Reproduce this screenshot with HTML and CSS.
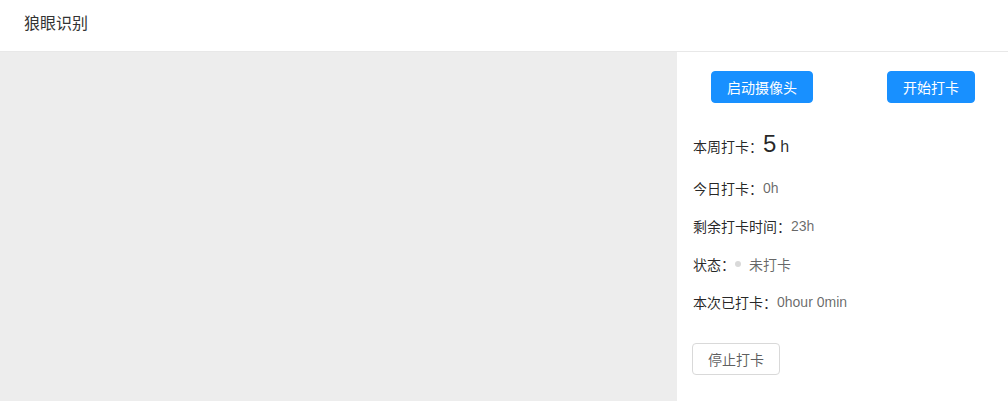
FILE: index.html
```html
<!DOCTYPE html>
<html lang="zh">
<head>
    <meta charset="UTF-8">
    <meta name="viewport" content="width=device-width, initial-scale=1.0">
    <title>狼眼识别</title>
    <link rel="stylesheet" href="styles.css">
</head>
<body>
    <!-- Top bar -->
    <div class="header">狼眼识别</div>

    <div class="main">
        <!-- Camera preview area -->
        <div class="video-box"></div>

        <!-- Clock-in panel -->
        <div class="panel">
            <div class="btn-row">
                <button class="btn btn-primary">启动摄像头</button>
                <button class="btn btn-primary">开始打卡</button>
            </div>

            <div class="row row-week">
                <span class="label">本周打卡：</span><span class="big">5</span><span class="unit">h</span>
            </div>
            <div class="row">
                <span class="label">今日打卡：</span><span class="value">0h</span>
            </div>
            <div class="row">
                <span class="label">剩余打卡时间：</span><span class="value">23h</span>
            </div>
            <div class="row">
                <span class="label">状态：</span><span class="dot"></span><span class="value">未打卡</span>
            </div>
            <div class="row">
                <span class="label">本次已打卡：</span><span class="value">0hour 0min</span>
            </div>

            <button class="btn btn-default">停止打卡</button>
        </div>
    </div>
</body>
</html>
```

FILE: styles.css
```css
body {
    margin: 0;
    font-family: "Liberation Sans", "Noto Sans CJK SC", sans-serif;
    font-size: 14px;
    color: rgba(0, 0, 0, 0.85);
    background-color: #fff;
}
.header {
    height: 51px;
    line-height: 47px;
    padding-left: 24px;
    font-size: 16px;
    color: #333;
    border-bottom: 1px solid #e8e8e8;
}
.main {
    display: flex;
    height: 349px;
}
.video-box {
    flex: 1;
    background-color: #ededed;
}
.panel {
    width: 331px;
    padding-left: 16px;
    box-sizing: border-box;
}
.btn-row {
    display: flex;
    justify-content: space-between;
    padding: 19px 33px 0 18px;
    margin-bottom: 27px;
}
.btn {
    height: 32px;
    padding: 0 15px;
    font-family: "Liberation Sans", "Noto Sans CJK SC", sans-serif;
    font-size: 14px;
    border-radius: 4px;
    border: 1px solid #d9d9d9;
    cursor: pointer;
}
.btn-primary {
    background-color: #1890ff;
    border-color: #1890ff;
    color: #fff;
}
.btn-default {
    background-color: #fff;
    color: rgba(0, 0, 0, 0.65);
    margin-top: 14px;
    margin-left: -1px;
}
.row {
    display: flex;
    align-items: center;
    height: 22px;
    margin-bottom: 16px;
}
.row-week {
    height: 28px;
    margin-bottom: 19px;
    align-items: baseline;
}
.label {
    color: rgba(0, 0, 0, 0.85);
}
.value {
    color: rgba(0, 0, 0, 0.6);
}
.big {
    font-size: 24px;
    color: rgba(0, 0, 0, 0.85);
}
.unit {
    margin-left: 4px;
    font-size: 16px;
    color: rgba(0, 0, 0, 0.85);
}
.dot {
    width: 6px;
    height: 6px;
    border-radius: 50%;
    background-color: #d9d9d9;
    margin-right: 8px;
}
```
